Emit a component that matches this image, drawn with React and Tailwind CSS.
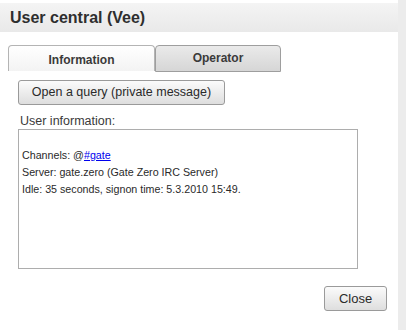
export default function App() {
  return (
    <div className="flex h-[330px] w-[406px] bg-white font-['Liberation_Sans',Arial,sans-serif] text-[#333]">
      <div className="flex w-[398px] flex-col">
        <div className="mt-[3px] flex h-[29px] items-center bg-gradient-to-b from-[#f4f4f4] to-[#e9e9e9] pl-[10px] text-[16px] font-bold text-[#2e2e2e]">
          User central (Vee)
        </div>

        <div className="flex px-[8px] pt-[13px]">
          <div className="flex h-[26px] w-[147px] items-center justify-center rounded-t-[4px] border border-b-0 border-[#b4b4b4] bg-gradient-to-b from-white to-[#f3f3f3] pt-[2px] text-[12px] font-bold text-[#3a3a3a]">
            Information
          </div>
          <div className="flex h-[27px] w-[126px] items-center justify-center rounded-t-[4px] border border-[#9e9e9e] bg-gradient-to-b from-[#eaeaea] to-[#d6d6d6] pb-[2px] text-[12px] font-bold text-[#3a3a3a]">
            Operator
          </div>
        </div>

        <div className="px-[18px] pt-[8px]">
          <button className="flex h-[25px] w-[207px] items-center justify-center rounded-[3px] border border-[#9a9a9a] bg-gradient-to-b from-[#fbfbfb] to-[#dedede] text-[12.5px] text-[#2a2a2a]">
            Open a query (private message)
          </button>
          <div className="mt-[8px] pl-[2px] text-[12.5px] leading-[16px] text-[#3a3a3a]">User information:</div>
          <div className="h-[140px] w-[340px] border border-[#adadad] px-[3px] pt-[17px] text-[10.7px] leading-[17px] text-[#2a2a2a]">
            <div>
              Channels: @<span className="text-[#0000ee] underline">#gate</span>
            </div>
            <div>Server: gate.zero (Gate Zero IRC Server)</div>
            <div>Idle: 35 seconds, signon time: 5.3.2010 15:49.</div>
          </div>
        </div>

        <div className="flex justify-end pr-[11px] pt-[17px]">
          <button className="flex h-[25px] w-[63px] items-center justify-center rounded-[3px] border border-[#9a9a9a] bg-gradient-to-b from-[#fbfbfb] to-[#dedede] text-[13px] text-[#2a2a2a]">
            Close
          </button>
        </div>
      </div>
      <div className="flex-1 bg-[#ececec]" />
    </div>
  );
}
